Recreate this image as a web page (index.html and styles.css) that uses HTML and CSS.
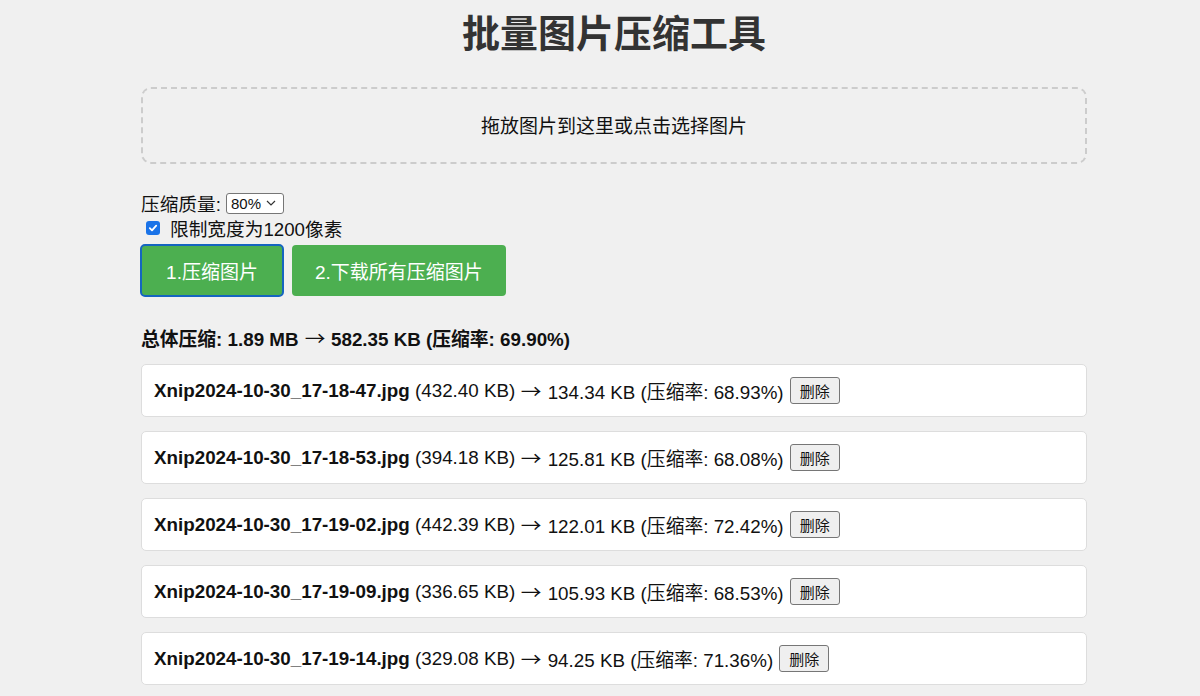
FILE: index.html
```html
<!DOCTYPE html>
<html lang="zh">
<head>
<meta charset="utf-8">
<title>批量图片压缩工具</title>
<link rel="stylesheet" href="styles.css">
</head>
<body>
<div class="container">
  <h1 class="title">批量图片压缩工具</h1>
  <div class="dropzone">拖放图片到这里或点击选择图片</div>
  <div class="options">
    <div class="quality">
      <label>压缩质量:</label>
      <span class="select">80%<svg width="10" height="6" viewBox="0 0 10 6"><path d="M1 1l4 4 4-4" fill="none" stroke="#333" stroke-width="1.2"/></svg></span>
    </div>
    <div class="limit">
      <span class="checkbox"><svg width="10" height="10" viewBox="0 0 10 10"><path d="M1.8 5.2l2.2 2.2 4.2-4.8" fill="none" stroke="#fff" stroke-width="1.8" stroke-linecap="round" stroke-linejoin="round"/></svg></span>
      <span>限制宽度为1200像素</span>
    </div>
  </div>
  <div class="actions">
    <button class="btn btn-focus">1.压缩图片</button>
    <button class="btn">2.下载所有压缩图片</button>
  </div>
  <div class="summary">总体压缩: 1.89 MB <span class="arrow">→</span> 582.35 KB (压缩率: 69.90%)</div>
  <div class="list">
    <div class="item"><b>Xnip2024-10-30_17-18-47.jpg</b> (432.40 KB) <span class="arrow">→</span> 134.34 KB (压缩率: 68.93%) <span class="del">删除</span></div>
    <div class="item"><b>Xnip2024-10-30_17-18-53.jpg</b> (394.18 KB) <span class="arrow">→</span> 125.81 KB (压缩率: 68.08%) <span class="del">删除</span></div>
    <div class="item"><b>Xnip2024-10-30_17-19-02.jpg</b> (442.39 KB) <span class="arrow">→</span> 122.01 KB (压缩率: 72.42%) <span class="del">删除</span></div>
    <div class="item"><b>Xnip2024-10-30_17-19-09.jpg</b> (336.65 KB) <span class="arrow">→</span> 105.93 KB (压缩率: 68.53%) <span class="del">删除</span></div>
    <div class="item"><b>Xnip2024-10-30_17-19-14.jpg</b> (329.08 KB) <span class="arrow">→</span> 94.25 KB (压缩率: 71.36%) <span class="del">删除</span></div>
  </div>
</div>
</body>
</html>
```
FILE: styles.css
```css
html, body {
  margin: 0;
  padding: 0;
  background: #f0f0f0;
}
body {
  font-family: "Liberation Sans", "Noto Sans CJK SC", sans-serif;
  color: #111;
  overflow: hidden;
}
.container {
  width: 946px;
  margin-left: 141px;
}
.title {
  margin: 0;
  padding-top: 10px;
  height: 49px;
  line-height: 48px;
  font-size: 38px;
  font-weight: bold;
  color: #333;
  text-align: center;
  margin-bottom: 28px;
}
.dropzone {
  box-sizing: border-box;
  height: 77px;
  border: 2px dashed #ccc;
  border-radius: 10px;
  display: flex;
  align-items: center;
  justify-content: center;
  font-size: 19px;
  color: #111;
  padding-bottom: 2px;
}
.options {
  margin-top: 26px;
  font-size: 18.7px;
}
.quality {
  display: flex;
  align-items: center;
  gap: 5px;
  height: 24px;
}
.select {
  box-sizing: border-box;
  height: 21px;
  width: 58px;
  border: 1px solid #767676;
  border-radius: 3px;
  background: #fff;
  font-size: 15px;
  display: inline-flex;
  align-items: center;
  gap: 5px;
  padding-left: 4px;
  margin-top: 2px;
}
.limit {
  display: flex;
  align-items: center;
  height: 27px;
  gap: 10px;
  padding-left: 5px;
}
.checkbox {
  width: 14px;
  height: 14px;
  border-radius: 3px;
  background: #1a73e8;
  display: inline-flex;
  align-items: center;
  justify-content: center;
}
.actions {
  display: flex;
  gap: 9px;
  margin-top: 4px;
}
.btn {
  box-sizing: border-box;
  height: 51px;
  padding: 0 23px;
  background: #4caf50;
  color: #fff;
  border: none;
  border-radius: 4px;
  font-family: inherit;
  font-size: 19px;
}
.btn-focus {
  outline: 2px solid #1565c0;
  outline-offset: -1px;
  width: 142px;
  padding: 0;
}
.summary {
  margin-top: 30px;
  font-size: 18.8px;
  font-weight: bold;
  height: 24px;
  line-height: 24px;
}
.arrow {
  display: inline-block;
  width: 22px;
  text-align: center;
  font-family: "Noto Sans CJK SC", sans-serif;
  font-weight: normal;
  transform: scaleX(1.1);
}
.list {
  margin-top: 14px;
  display: flex;
  flex-direction: column;
  gap: 14px;
}
.item {
  box-sizing: border-box;
  height: 53px;
  background: #fff;
  border: 1px solid #ddd;
  border-radius: 5px;
  padding-left: 12px;
  display: flex;
  align-items: center;
  font-size: 18.8px;
  white-space: pre;
}
.item b {
  font-weight: bold;
}
.del {
  box-sizing: border-box;
  display: inline-flex;
  align-items: center;
  justify-content: center;
  height: 27px;
  width: 50px;
  border: 1px solid #767676;
  border-radius: 3px;
  background: #efefef;
  font-size: 15px;
  margin-left: 1px;
}
```
